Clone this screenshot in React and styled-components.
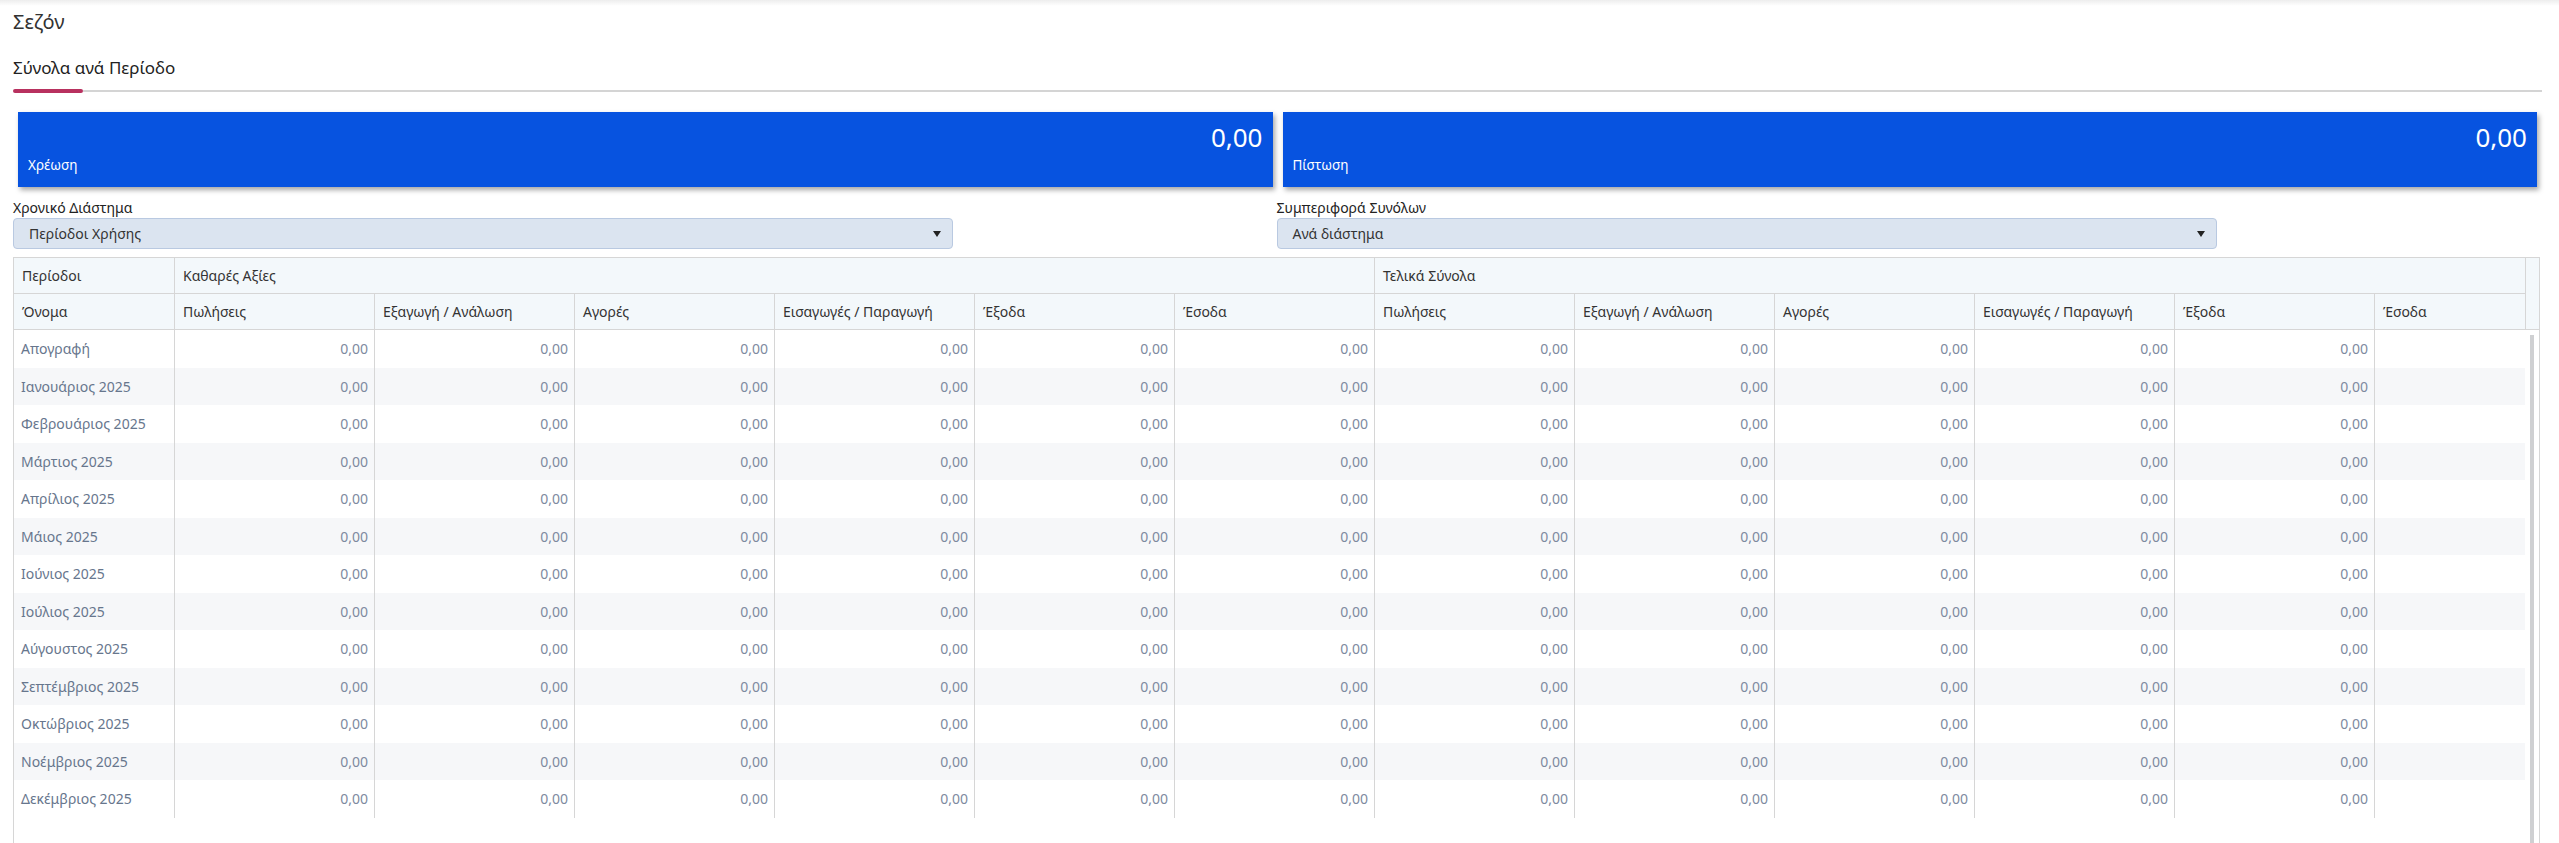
import React from "react";
import styled, { createGlobalStyle } from "styled-components";

const periods = [
  "Απογραφή",
  "Ιανουάριος 2025",
  "Φεβρουάριος 2025",
  "Μάρτιος 2025",
  "Απρίλιος 2025",
  "Μάιος 2025",
  "Ιούνιος 2025",
  "Ιούλιος 2025",
  "Αύγουστος 2025",
  "Σεπτέμβριος 2025",
  "Οκτώβριος 2025",
  "Νοέμβριος 2025",
  "Δεκέμβριος 2025",
];

const measures = [
  "Πωλήσεις",
  "Εξαγωγή / Ανάλωση",
  "Αγορές",
  "Εισαγωγές / Παραγωγή",
  "Έξοδα",
  "Έσοδα",
];

const columns = [...measures, ...measures];
// the last column is cut by the scroll area, its values are not visible
const lastCol = columns.length - 1;

export default function App() {
  return (
    <>
      <GlobalStyle />
      <TopShade />
      <Page>
        <Title>Σεζόν</Title>
        <TabTitle>Σύνολα ανά Περίοδο</TabTitle>
        <TabTrack>
          <TabIndicator />
          <TabLine />
        </TabTrack>

        <Cards>
          <Card>
            <CardValue>0,00</CardValue>
            <CardLabel>Χρέωση</CardLabel>
          </Card>
          <Card>
            <CardValue>0,00</CardValue>
            <CardLabel>Πίστωση</CardLabel>
          </Card>
        </Cards>

        <Filters>
          <Field>
            <Label>Χρονικό Διάστημα</Label>
            <Select>
              <span>Περίοδοι Χρήσης</span>
              <Arrow />
            </Select>
          </Field>
          <Field>
            <Label>Συμπεριφορά Συνόλων</Label>
            <Select>
              <span>Ανά διάστημα</span>
              <Arrow />
            </Select>
          </Field>
        </Filters>

        <Table>
          <HeadWrap>
            <Clip>
              <GroupRow>
                <HeadCell>Περίοδοι</HeadCell>
                <HeadCell>Καθαρές Αξίες</HeadCell>
                <HeadCell>Τελικά Σύνολα</HeadCell>
              </GroupRow>
              <ColumnRow>
                <HeadCell>Όνομα</HeadCell>
                {columns.map((c, i) => (
                  <HeadCell key={i}>{c}</HeadCell>
                ))}
              </ColumnRow>
            </Clip>
            <HeadGutter />
          </HeadWrap>

          <BodyWrap>
            <Clip>
              {periods.map((p, r) => (
                <BodyRow key={p} striped={r % 2 === 1}>
                  <NameCell>{p}</NameCell>
                  {columns.map((c, i) => (
                    <ValueCell key={i}>{i === lastCol ? "" : "0,00"}</ValueCell>
                  ))}
                </BodyRow>
              ))}
            </Clip>
            <BodyGutter>
              <Thumb />
            </BodyGutter>
          </BodyWrap>
        </Table>
      </Page>
    </>
  );
}

function Arrow() {
  return (
    <svg width="8" height="6" viewBox="0 0 8 6">
      <path d="M0 0 L8 0 L4 6 Z" fill="#222" />
    </svg>
  );
}

const GlobalStyle = createGlobalStyle({
  "html, body": {
    margin: 0,
    padding: 0,
    overflow: "hidden",
    background: "#fff",
  },
  body: {
    fontFamily: '"Noto Sans", "Open Sans", sans-serif',
    color: "#333",
  },
  "*": {
    boxSizing: "border-box",
  },
});

const TopShade = styled.div({
  height: 6,
  background: "linear-gradient(to bottom, rgba(0,0,0,0.07), rgba(0,0,0,0))",
});

const Page = styled.div({
  padding: "0 19px 0 13px",
  display: "flex",
  flexDirection: "column",
});

const Title = styled.div({
  marginTop: 2,
  fontSize: 20,
  lineHeight: "28px",
  color: "#333",
});

const TabTitle = styled.div({
  marginTop: 20,
  fontSize: 17,
  lineHeight: "24px",
  color: "#222",
});

const TabTrack = styled.div({
  marginTop: 9,
  height: 4,
  display: "flex",
  alignItems: "center",
  marginRight: -2,
});

const TabIndicator = styled.div({
  width: 70,
  height: 4,
  borderRadius: 2,
  background: "#b8315f",
});

const TabLine = styled.div({
  flex: 1,
  height: 2,
  background: "#d4d4d4",
});

const Cards = styled.div({
  marginTop: 19,
  padding: "0 3px 0 5px",
  display: "grid",
  gridTemplateColumns: "1fr 1fr",
  gap: 10,
});

const Card = styled.div({
  height: 75,
  background: "#0753e0",
  color: "#fff",
  padding: "9px 10px 13px 10px",
  display: "flex",
  flexDirection: "column",
  justifyContent: "space-between",
  boxShadow: "2px 3px 5px rgba(0,0,0,0.35)",
});

const CardValue = styled.div({
  fontSize: 26,
  lineHeight: "32px",
  textAlign: "right",
});

const CardLabel = styled.div({
  fontSize: 13.5,
  lineHeight: "18px",
});

const Filters = styled.div({
  marginTop: 13,
  display: "grid",
  gridTemplateColumns: "1fr 1fr",
});

const Field = styled.div({
  display: "flex",
  flexDirection: "column",
});

const Label = styled.div({
  fontSize: 14,
  lineHeight: "16px",
  color: "#222",
});

const Select = styled.div({
  marginTop: 2,
  width: 940,
  height: 31,
  padding: "0 11px 0 15px",
  display: "flex",
  alignItems: "center",
  justifyContent: "space-between",
  background: "#dbe4f0",
  border: "1px solid #b9c9e1",
  borderRadius: 4,
  fontSize: 14,
  color: "#333",
});

const Table = styled.div({
  marginTop: 8,
  border: "1px solid #d6d6d6",
  borderBottom: "none",
  display: "flex",
  flexDirection: "column",
});

const HeadWrap = styled.div({
  display: "flex",
  background: "#f3f8fb",
  borderBottom: "1px solid #d6d6d6",
});

const Clip = styled.div({
  flex: 1,
  minWidth: 0,
  overflow: "hidden",
});

const GroupRow = styled.div({
  display: "grid",
  gridTemplateColumns: "161px 1200px 1150px",
  borderBottom: "1px solid #d6d6d6",
});

const ColumnRow = styled.div({
  display: "grid",
  gridTemplateColumns: "161px repeat(11, 200px) 150px",
});

const HeadCell = styled.div({
  height: 35,
  padding: "0 8px",
  display: "flex",
  alignItems: "center",
  borderRight: "1px solid #d6d6d6",
  fontSize: 14,
  color: "#333",
  whiteSpace: "nowrap",
  "&:last-child": {
    borderRight: "none",
  },
});

const HeadGutter = styled.div({
  width: 14,
  borderLeft: "1px solid #d6d6d6",
});

const BodyWrap = styled.div({
  display: "flex",
  height: 513,
  overflow: "hidden",
});

const BodyRow = styled.div(({ striped }) => ({
  display: "grid",
  gridTemplateColumns: "161px repeat(11, 200px) 150px",
  height: 37.5,
  background: striped ? "#f6f7f9" : "#fff",
}));

const NameCell = styled.div({
  padding: "0 7px",
  display: "flex",
  alignItems: "center",
  borderRight: "1px solid #d6d6d6",
  fontSize: 14,
  color: "#67768d",
  whiteSpace: "nowrap",
});

const ValueCell = styled(NameCell)({
  justifyContent: "flex-end",
  padding: "0 6px",
  color: "#7e8aa0",
  "&:last-child": {
    borderRight: "none",
  },
});

const BodyGutter = styled.div({
  width: 14,
  padding: "5px 0 0 5px",
  display: "flex",
  flexDirection: "column",
});

const Thumb = styled.div({
  flex: 1,
  width: 4,
  background: "#cfd0d2",
});
